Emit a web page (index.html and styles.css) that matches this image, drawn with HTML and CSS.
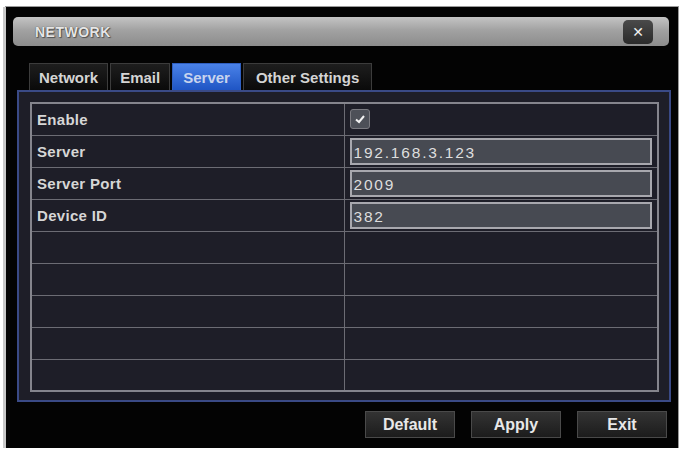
FILE: index.html
```html
<!DOCTYPE html>
<html lang="en">
<head>
    <meta charset="UTF-8">
    <title>Network</title>
    <link rel="stylesheet" href="styles.css">
</head>
<body>
    <div class="window">
        <div class="title-bar">
            <span class="title">NETWORK</span>
            <button class="close-btn" aria-label="Close">&#x2715;</button>
        </div>
        <div class="tabs">
            <div class="tab">Network</div>
            <div class="tab">Email</div>
            <div class="tab active">Server</div>
            <div class="tab">Other Settings</div>
        </div>
        <div class="panel">
            <table class="settings">
                <tr>
                    <td class="label">Enable</td>
                    <td><span class="checkbox checked">
                        <svg viewBox="0 0 12 12" width="12" height="12"><path d="M2 6.5 L5 9 L10 3" fill="none" stroke="#f2f2f2" stroke-width="2"/></svg>
                    </span></td>
                </tr>
                <tr>
                    <td class="label">Server</td>
                    <td><div class="field">192.168.3.123</div></td>
                </tr>
                <tr>
                    <td class="label">Server Port</td>
                    <td><div class="field">2009</div></td>
                </tr>
                <tr>
                    <td class="label">Device ID</td>
                    <td><div class="field">382</div></td>
                </tr>
                <tr><td></td><td></td></tr>
                <tr><td></td><td></td></tr>
                <tr><td></td><td></td></tr>
                <tr><td></td><td></td></tr>
                <tr><td></td><td></td></tr>
            </table>
        </div>
        <div class="actions">
            <button class="btn">Default</button>
            <button class="btn">Apply</button>
            <button class="btn">Exit</button>
        </div>
    </div>
</body>
</html>
```
FILE: styles.css
```css
* {
    margin: 0;
    padding: 0;
    box-sizing: border-box;
}

body {
    background: #ffffff;
    font-family: 'Liberation Sans', Arial, sans-serif;
    padding: 7px 0 0 6px;
}

.window {
    width: 672px;
    height: 441px;
    background: #030303;
    box-shadow: -3px 0 0 #c8c8c8, 0 0 0 1px #9a9a9a;
    padding: 10px 9px 0 7px;
}

.title-bar {
    height: 29px;
    border-radius: 5px;
    background: linear-gradient(#c4c4c4, #a2a2a2 45%, #8c8c8c);
    display: flex;
    align-items: center;
    justify-content: space-between;
    padding: 0 16px 0 22px;
}

.title {
    color: #e6e6e6;
    font-size: 14px;
    font-weight: bold;
    letter-spacing: 0.5px;
    text-shadow: 0 0 1px #333, 1px 1px 1px #555;
}

.close-btn {
    width: 30px;
    height: 24px;
    border: none;
    border-radius: 5px;
    background: linear-gradient(#4a4a4a, #2a2a2a);
    color: #f0f0f0;
    font-size: 14px;
    font-weight: bold;
    font-family: 'DejaVu Sans', sans-serif;
}

.tabs {
    display: flex;
    gap: 2px;
    margin: 17px 0 0 16px;
    height: 27px;
}

.tab {
    border: 1px solid #3c3c3c;
    border-bottom: none;
    background: linear-gradient(#1e1e1e, #0a0a0a);
    color: #d4d4d4;
    font-size: 15px;
    font-weight: bold;
    padding: 5px 9px 0;
    white-space: nowrap;
}

.tab.active {
    background: linear-gradient(#4a82e8, #1f55c4);
    border-color: #2f5fc0;
    color: #c8d4ee;
    padding: 5px 10px 0;
}

.tab:last-child {
    padding: 5px 12px 0;
}

.panel {
    margin-left: 4px;
    width: 654px;
    height: 312px;
    border: 2px solid #3a4a86;
    background: #1e1e28;
    padding: 10px 11px 0 11px;
}

.settings {
    width: 629px;
    border-collapse: collapse;
    border: 2px solid #85858d;
}

.settings td {
    height: 32px;
    border: 1px solid #6c6c74;
    padding: 0;
    vertical-align: middle;
}

.settings td:first-child {
    width: 313px;
}

.settings td.label {
    color: #d6d6d6;
    font-size: 15px;
    font-weight: bold;
    padding-left: 5px;
    letter-spacing: 0.3px;
}

.settings td:last-child {
    padding-left: 5px;
}

.checkbox {
    display: flex;
    align-items: center;
    justify-content: center;
    width: 20px;
    height: 20px;
    border: 1px solid #7a7a80;
    border-radius: 3px;
    background: #4d5058;
}

.field {
    width: 302px;
    height: 27px;
    border: 2px solid #a8a8ae;
    background: #474a52;
    color: #dedede;
    font-size: 15.5px;
    letter-spacing: 1.8px;
    padding: 4px 0 0 2px;
}

.actions {
    display: flex;
    justify-content: flex-end;
    gap: 16px;
    margin-top: 9px;
    padding-right: 2px;
}

.btn {
    width: 90px;
    height: 27px;
    border: 1px solid #4a4a4a;
    background: linear-gradient(#333, #1c1c1c);
    color: #e8e8e8;
    font-family: 'Liberation Sans', Arial, sans-serif;
    font-size: 16px;
    font-weight: bold;
}
```
